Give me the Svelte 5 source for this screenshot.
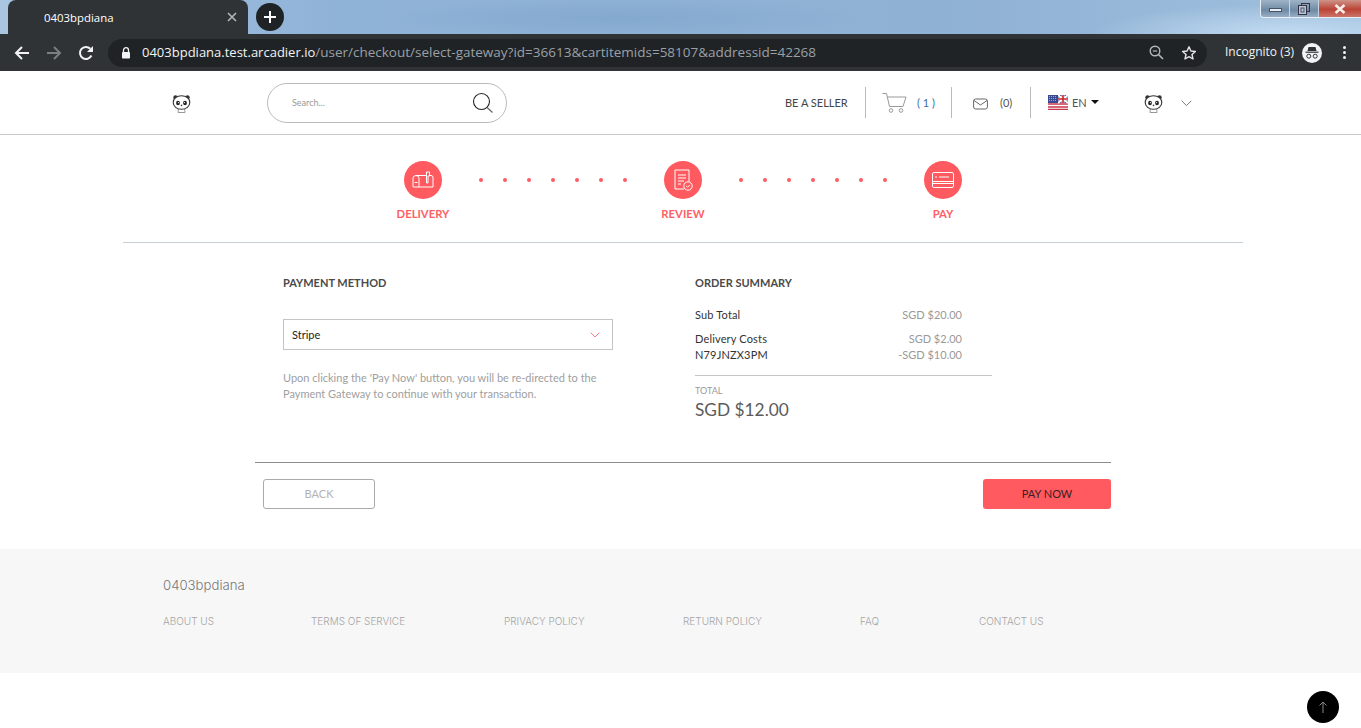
<script>
  const dots = [0, 1, 2, 3, 4, 5, 6];
  const links = [
    { label: 'ABOUT US', w: 148 },
    { label: 'TERMS OF SERVICE', w: 193 },
    { label: 'PRIVACY POLICY', w: 179 },
    { label: 'RETURN POLICY', w: 177 },
    { label: 'FAQ', w: 119 },
    { label: 'CONTACT US', w: 100 }
  ];
</script>

{#snippet panda()}
  <svg class="panda" width="19" height="20" viewBox="0 0 19 20">
    <path d="M6.5 14l-.5 4.5h7l-.5-4.5" fill="#fff" stroke="#999" stroke-width="1" />
    <circle cx="3.5" cy="3.5" r="2.2" fill="#333" />
    <circle cx="15.5" cy="3.5" r="2.2" fill="#333" />
    <ellipse cx="9.5" cy="8.5" rx="8.3" ry="6.8" fill="#fff" stroke="#333" stroke-width="1.1" />
    <ellipse cx="6" cy="9" rx="1.9" ry="2.2" fill="#222" />
    <ellipse cx="13" cy="9" rx="1.9" ry="2.2" fill="#222" />
    <circle cx="6.4" cy="8.6" r="0.6" fill="#fff" />
    <circle cx="12.6" cy="8.6" r="0.6" fill="#fff" />
    <circle cx="9.5" cy="11.4" r="0.8" fill="#444" />
  </svg>
{/snippet}

<div class="chrome">
  <div class="tabstrip">
    <div class="tab">
      <span class="tab-title">0403bpdiana</span>
      <svg class="tab-x" width="10" height="10" viewBox="0 0 10 10"><path d="M1 1l8 8M9 1l-8 8" stroke="#b5b8bb" stroke-width="1.6" /></svg>
    </div>
    <div class="newtab">
      <svg width="14" height="14" viewBox="0 0 14 14"><path d="M7 1v12M1 7h12" stroke="#fff" stroke-width="2" /></svg>
    </div>
    <div class="winctl">
      <div class="wbtn"><span class="w-min"></span></div>
      <div class="wbtn">
        <svg width="12" height="12" viewBox="0 0 12 12"><rect x="3.5" y="0.5" width="8" height="8" fill="none" stroke="#334" /><rect x="0.5" y="2.5" width="8" height="9" fill="#b4c6d8" stroke="#334" /><rect x="3" y="5" width="3" height="4" fill="none" stroke="#556" /></svg>
      </div>
      <div class="wbtn close">
        <svg width="14" height="10" viewBox="0 0 14 10"><path d="M2.5 1l9 8M11.5 1l-9 8" stroke="#f4efe9" stroke-width="2.6" /></svg>
      </div>
    </div>
  </div>
  <div class="toolbar">
    <svg class="tb-icon back" width="16" height="16" viewBox="0 0 16 16"><path d="M15 8H2M8 2L2 8l6 6" fill="none" stroke="#f1f3f4" stroke-width="2" /></svg>
    <svg class="tb-icon fwd" width="16" height="16" viewBox="0 0 16 16"><path d="M1 8h13M8 2l6 6-6 6" fill="none" stroke="#7b7e81" stroke-width="2" /></svg>
    <svg class="tb-icon reload" width="16" height="16" viewBox="0 0 16 16"><path d="M13.4 10.5A6 6 0 1 1 12.3 3.8" fill="none" stroke="#f1f3f4" stroke-width="2" /><path d="M15 1v6H9z" fill="#f1f3f4" /></svg>
    <div class="omni">
      <svg class="lock" width="10" height="12" viewBox="0 0 10 12"><path d="M2.5 5V3.2a2.5 2.5 0 0 1 5 0V5" fill="none" stroke="#f1f3f4" stroke-width="1.3" /><rect x="1" y="5" width="8" height="6.5" rx="0.8" fill="#f1f3f4" /></svg>
      <span class="url"><span class="host">0403bpdiana.test.arcadier.io</span>/user/checkout/select-gateway?id=36613&amp;cartitemids=58107&amp;addressid=42268</span>
      <svg class="zoomout" width="15" height="15" viewBox="0 0 15 15"><circle cx="6" cy="6" r="4.8" fill="none" stroke="#b5b8bb" stroke-width="1.4" /><path d="M9.5 9.5L14 14" stroke="#b5b8bb" stroke-width="1.6" /><path d="M3.8 6h4.4" stroke="#b5b8bb" stroke-width="1.2" /></svg>
      <svg class="star" width="16" height="16" viewBox="0 0 16 16"><path d="M8 1.8l1.9 4.2 4.5.5-3.4 3 1 4.5L8 11.7 4 14l1-4.5-3.4-3 4.5-.5z" fill="none" stroke="#e3e5e7" stroke-width="1.4" stroke-linejoin="round" /></svg>
    </div>
    <span class="incog">Incognito (3)</span>
    <svg class="incog-ic" width="20" height="20" viewBox="0 0 20 20">
      <circle cx="10" cy="10" r="10" fill="#f1f3f4" />
      <path d="M6.5 4h7l1 4h-9z" fill="#303336" />
      <path d="M3.5 9.2h13" stroke="#303336" stroke-width="1.2" />
      <circle cx="6.8" cy="13.2" r="2" fill="none" stroke="#303336" stroke-width="1" />
      <circle cx="13.2" cy="13.2" r="2" fill="none" stroke="#303336" stroke-width="1" />
    </svg>
    <div class="kebab"><i></i><i></i><i></i></div>
  </div>
</div>

<header class="site-header">
  <div class="logo">{@render panda()}</div>
  <div class="search">
    <span>Search...</span>
    <svg width="22" height="22" viewBox="0 0 22 22"><circle cx="9.5" cy="9.5" r="8" fill="none" stroke="#222" stroke-width="1.1" /><path d="M15 15.5l5.5 5" stroke="#666" stroke-width="1.2" /></svg>
  </div>
  <a class="seller">BE A SELLER</a>
  <span class="vr first"></span>
  <svg class="cart" width="25" height="22" viewBox="0 0 25 22"><path d="M0.5 1.5h4l3 13h13.5l3-9.5H5.5" fill="none" stroke="#999" stroke-width="1" /><circle cx="9" cy="18.5" r="1.8" fill="none" stroke="#999" /><circle cx="19" cy="18.5" r="1.8" fill="none" stroke="#999" /></svg>
  <span class="cart-count">( 1 )</span>
  <span class="vr second"></span>
  <svg class="mail" width="15" height="12" viewBox="0 0 15 12"><rect x="0.6" y="1" width="13.8" height="10" rx="2" fill="none" stroke="#666" /><path d="M1 2.5l6.5 4.5L14 2.5" fill="none" stroke="#666" /></svg>
  <span class="mail-count">(0)</span>
  <span class="vr third"></span>
  <svg class="flag" width="20" height="15" viewBox="0 0 20 15">
    <rect width="20" height="15" fill="#fff" />
    <path d="M0 9h20M0 12h20M0 14.5h20" stroke="#c8364a" stroke-width="1.4" />
    <rect x="10" width="10" height="8" fill="#26357f" />
    <path d="M10 0l10 8M20 0L10 8" stroke="#fff" stroke-width="2" />
    <path d="M15 0v8M10 4h10" stroke="#fff" stroke-width="3" />
    <path d="M15 0v8M10 4h10" stroke="#c8202f" stroke-width="1.6" />
    <rect width="10" height="8" fill="#3a4a90" />
    <path d="M1 1.5h8M1 3.5h8M1 5.5h8" stroke="#b9c0dc" stroke-width="0.8" stroke-dasharray="1 1" />
  </svg>
  <span class="lang">EN</span>
  <span class="caret"></span>
  <div class="avatar">{@render panda()}</div>
  <svg class="chev" width="11" height="7" viewBox="0 0 11 7"><path d="M0.7 0.8L5.5 5.6 10.3 0.8" fill="none" stroke="#777" stroke-width="1" /></svg>
</header>

<section class="steps">
  <div class="steps-row">
    <div class="step">
      <div class="circle">
        <svg width="24" height="20" viewBox="0 0 24 20" fill="none" stroke="#fff" stroke-width="1"><path d="M5 5.5h15a2 2 0 0 1 2 2V17H2V8.5a3 3 0 0 1 3-3a3 3 0 0 1 3 3V17" /><path d="M3.5 12.5h3" /><path d="M15.5 2h3v4h-1.5v7h-1.5z" fill="#ff5a60" /></svg>
      </div>
      <span class="step-label">DELIVERY</span>
    </div>
    <div class="dots">{#each dots as d (d)}<i></i>{/each}</div>
    <div class="step">
      <div class="circle">
        <svg width="22" height="24" viewBox="0 0 22 24" fill="none" stroke="#fff" stroke-width="1"><path d="M12 21H3V2h14v13" /><path d="M6 7h8M6 10h8M6 13h6M6 16h3" /><circle cx="16" cy="18" r="4.2" fill="#ff5a60" /><path d="M14.2 18l1.3 1.3 2.4-2.4" /></svg>
      </div>
      <span class="step-label">REVIEW</span>
    </div>
    <div class="dots">{#each dots as d (d)}<i></i>{/each}</div>
    <div class="step">
      <div class="circle">
        <svg width="24" height="18" viewBox="0 0 24 18" fill="none" stroke="#fff" stroke-width="1"><rect x="1.5" y="1.5" width="21" height="15" rx="1.5" /><path d="M1.5 10.5h21M1.5 12.5h21" /><path d="M4 6h2M8 6h10" /></svg>
      </div>
      <span class="step-label">PAY</span>
    </div>
  </div>
</section>

<main class="content">
  <div class="col-left">
    <h2>PAYMENT METHOD</h2>
    <div class="select">
      <span>Stripe</span>
      <svg width="10" height="6" viewBox="0 0 10 6"><path d="M0.7 0.7L5 5l4.3-4.3" fill="none" stroke="#ff7a80" stroke-width="1" /></svg>
    </div>
    <p class="help">Upon clicking the 'Pay Now' button, you will be re-directed to the Payment Gateway to continue with your transaction.</p>
  </div>
  <div class="col-right">
    <h2>ORDER SUMMARY</h2>
    <div class="rows">
      <div class="row sub"><span>Sub Total</span><b>SGD $20.00</b></div>
      <div class="row"><span>Delivery Costs</span><b>SGD $2.00</b></div>
      <div class="row"><span>N79JNZX3PM</span><b>-SGD $10.00</b></div>
    </div>
    <div class="total">
      <span class="total-label">TOTAL</span>
      <span class="total-val">SGD $12.00</span>
    </div>
  </div>
</main>

<div class="actions">
  <button class="btn-back">BACK</button>
  <button class="btn-pay">PAY NOW</button>
</div>

<footer class="footer">
  <div class="brand">0403bpdiana</div>
  <nav class="links">
    {#each links as l (l.label)}
      <a style="width:{l.w}px">{l.label}</a>
    {/each}
  </nav>
</footer>

<div class="totop">
  <svg width="10" height="12" viewBox="0 0 10 12"><path d="M5 12V1M1.5 4.5L5 1l3.5 3.5" fill="none" stroke="#8a8a8a" stroke-width="1" /></svg>
</div>

<style>
  :global(body) {
    margin: 0;
    background: #fff;
    font-family: "Lato", "Liberation Sans", sans-serif;
    overflow: hidden;
  }
  .chrome { font-family: "Open Sans", "Liberation Sans", sans-serif; }
  .tabstrip {
    height: 34px;
    display: flex;
    align-items: flex-start;
    background:
      radial-gradient(ellipse 240px 20px at 620px 18px, #84a9cf 0%, transparent 100%),
      radial-gradient(ellipse 200px 30px at 1290px 34px, #c3dcf2 0%, transparent 100%),
      linear-gradient(90deg, #a9c5e2 0%, #8fb2d7 25%, #8fb1d4 70%, #a0c0de 100%);
  }
  .tab {
    width: 240px;
    height: 34px;
    margin-left: 8px;
    background: #303336;
    border-radius: 8px 8px 0 0;
    display: flex;
    align-items: center;
    color: #fff;
    font-size: 11.4px;
    box-sizing: border-box;
    padding: 0 11px 0 36px;
  }
  .tab-title { flex: 1; }
  .newtab {
    width: 28px;
    height: 28px;
    border-radius: 50%;
    background: #202326;
    margin: 3px 0 0 8px;
    display: flex;
    align-items: center;
    justify-content: center;
  }
  .winctl {
    margin-left: auto;
    width: 101px;
    height: 18px;
    display: flex;
    border: 1px solid #e8eff6;
    border-top: 0;
    border-right: 0;
    border-radius: 0 0 0 4px;
    box-sizing: border-box;
    overflow: hidden;
  }
  .wbtn {
    width: 28px;
    display: flex;
    align-items: center;
    justify-content: center;
    background: linear-gradient(#9fb3c6, #6f8aa5 60%, #98aec4);
    border-right: 1px solid #c6d4e2;
  }
  .w-min { width: 13px; height: 4px; background: #e8edf2; border: 1px solid #44546a; box-sizing: border-box; margin-top: 2px; }
  .wbtn.close {
    flex: 1;
    border-right: 0;
    background: linear-gradient(#cf9388, #bb4436 55%, #cc7468);
  }
  .toolbar {
    height: 37px;
    background: #303336;
    display: flex;
    align-items: center;
  }
  .tb-icon { flex: none; }
  .back { margin-left: 14px; }
  .fwd { margin-left: 16px; }
  .reload { margin-left: 16px; }
  .omni {
    margin-left: 14px;
    width: 1099px;
    height: 28px;
    border-radius: 14px;
    background: #202326;
    display: flex;
    align-items: center;
    box-sizing: border-box;
    padding-left: 13px;
    flex: none;
  }
  .lock { flex: none; }
  .url {
    margin-left: 11px;
    padding-bottom: 2px;
    font-size: 13.5px;
    color: #9aa0a6;
    flex: 1;
    white-space: nowrap;
  }
  .host { color: #f1f3f4; font-size: 13px; }
  .zoomout { margin-right: 17px; flex: none; }
  .star { margin-right: 10px; flex: none; }
  .incog { margin-left: 18px; padding-bottom: 2px; color: #f1f3f4; font-size: 12px; white-space: nowrap; }
  .incog-ic { margin-left: 8px; flex: none; }
  .kebab { margin-left: 21px; display: flex; flex-direction: column; gap: 2px; }
  .kebab i { width: 3px; height: 3px; border-radius: 50%; background: #f1f3f4; display: block; }

  .site-header {
    height: 64px;
    box-sizing: border-box;
    border-bottom: 1px solid #c9c9c9;
    display: flex;
    align-items: center;
    color: #444;
  }
  .panda { display: block; margin: 2px auto 0; }
  .logo { margin-left: 170px; width: 22px; }
  .search {
    margin-left: 75px;
    width: 240px;
    height: 40px;
    box-sizing: border-box;
    border: 1px solid #bbb;
    border-radius: 20px;
    display: flex;
    align-items: center;
    justify-content: space-between;
    padding: 0 12px 0 24px;
    font-size: 9px;
    color: #999;
    flex: none;
  }
  .seller { margin-left: 278px; font-size: 11px; color: #444; white-space: nowrap; width: 63px; }
  .vr { width: 1px; height: 31px; background: #bbb; flex: none; }
  .vr.first { margin-left: 17px; }
  .cart { margin-left: 16px; flex: none; }
  .cart-count { margin-left: 10px; font-size: 11px; color: #3a6ea5; width: 17px; white-space: nowrap; }
  .vr.second { margin-left: 17px; }
  .mail { margin-left: 21px; flex: none; margin-top: 2px; }
  .mail-count { margin-left: 12px; font-size: 11px; color: #555; width: 13px; }
  .vr.third { margin-left: 17px; }
  .flag { margin-left: 17px; flex: none; }
  .lang { margin-left: 4px; font-size: 11px; color: #555; width: 15px; }
  .caret {
    margin-left: 4px;
    border-left: 4px solid transparent;
    border-right: 4px solid transparent;
    border-top: 4px solid #111;
    margin-top: -2px;
  }
  .avatar { margin-left: 43px; width: 22px; }
  .chev { margin-left: 17px; margin-top: 2px; flex: none; }

  .steps {
    margin: 0 118px 0 123px;
    height: 108px;
    box-sizing: border-box;
    border-bottom: 1px solid #c5cfd4;
  }
  .steps-row {
    display: flex;
    align-items: flex-start;
    padding: 26px 0 0 260px;
  }
  .step {
    width: 80px;
    display: flex;
    flex-direction: column;
    align-items: center;
  }
  .circle {
    width: 38px;
    height: 38px;
    border-radius: 50%;
    background: #ff5a60;
    display: flex;
    align-items: center;
    justify-content: center;
  }
  .step-label {
    margin-top: 8px;
    font-size: 11.3px;
    line-height: 14px;
    font-weight: 700;
    color: #ff6066;
  }
  .dots {
    width: 180px;
    height: 38px;
    display: flex;
    align-items: center;
    justify-content: center;
    gap: 20px;
  }
  .dots i { width: 4px; height: 4px; border-radius: 50%; background: #ff5a60; display: block; }

  .content {
    display: flex;
    padding-left: 283px;
    height: 219px;
    box-sizing: border-box;
  }
  h2 {
    margin: 0;
    font-size: 11px;
    line-height: 14px;
    font-weight: 700;
    color: #4a4a4a;
    padding-top: 33px;
  }
  .col-left { width: 330px; margin-right: 82px; }
  .select {
    margin-top: 29px;
    height: 31px;
    box-sizing: border-box;
    border: 1px solid #c4c4c4;
    display: flex;
    align-items: center;
    justify-content: space-between;
    padding: 0 12px 0 8px;
    font-size: 11px;
    color: #222;
  }
  .help {
    margin: 20px 0 0;
    font-size: 11px;
    line-height: 16px;
    color: #a0a0a0;
    width: 326px;
  }
  .col-right { width: 297px; }
  .rows { margin-top: 17px; border-bottom: 1px solid #c4c4c4; padding-bottom: 12px; }
  .row {
    display: flex;
    justify-content: space-between;
    width: 267px;
    font-size: 11px;
    line-height: 16px;
    color: #333;
  }
  .row span { letter-spacing: 0.16px; }
  .row.sub { margin-bottom: 8px; }
  .row b { font-weight: 400; color: #999; }
  .total { display: flex; flex-direction: column; margin-top: 9px; }
  .total-label { font-size: 9px; line-height: 12px; color: #999; }
  .total-val { font-size: 17.3px; line-height: 24px; color: #5b5b5b; margin-top: 1px; }

  .actions {
    margin: 0 250px 0 255px;
    height: 87px;
    box-sizing: border-box;
    border-top: 1px solid #8c8c8c;
    display: flex;
    justify-content: space-between;
    align-items: flex-start;
    padding: 16px 0 0 8px;
  }
  button {
    height: 30px;
    font: 400 11px "Lato", "Liberation Sans", sans-serif;
    border-radius: 3px;
    padding: 0 0 2px;
  }
  .btn-back { width: 112px; background: #fff; border: 1px solid #aaa; color: #b3b3b3; }
  .btn-pay { width: 128px; background: #ff5a60; border: 0; color: #3a2020; }

  .footer {
    height: 124px;
    background: #f7f7f7;
    padding: 28px 0 0 163px;
    box-sizing: border-box;
    font-family: "Inter", "Lato", sans-serif;
    font-weight: 300;
  }
  .brand { font-size: 13.2px; line-height: 17px; color: #777; }
  .links { display: flex; margin-top: 20px; }
  .links a { font-size: 10px; line-height: 14px; color: #a5a5a5; white-space: nowrap; flex: none; }

  .totop {
    position: fixed;
    left: 1307px;
    top: 691px;
    width: 32px;
    height: 32px;
    border-radius: 50%;
    background: #000;
    display: flex;
    align-items: center;
    justify-content: center;
  }
</style>
